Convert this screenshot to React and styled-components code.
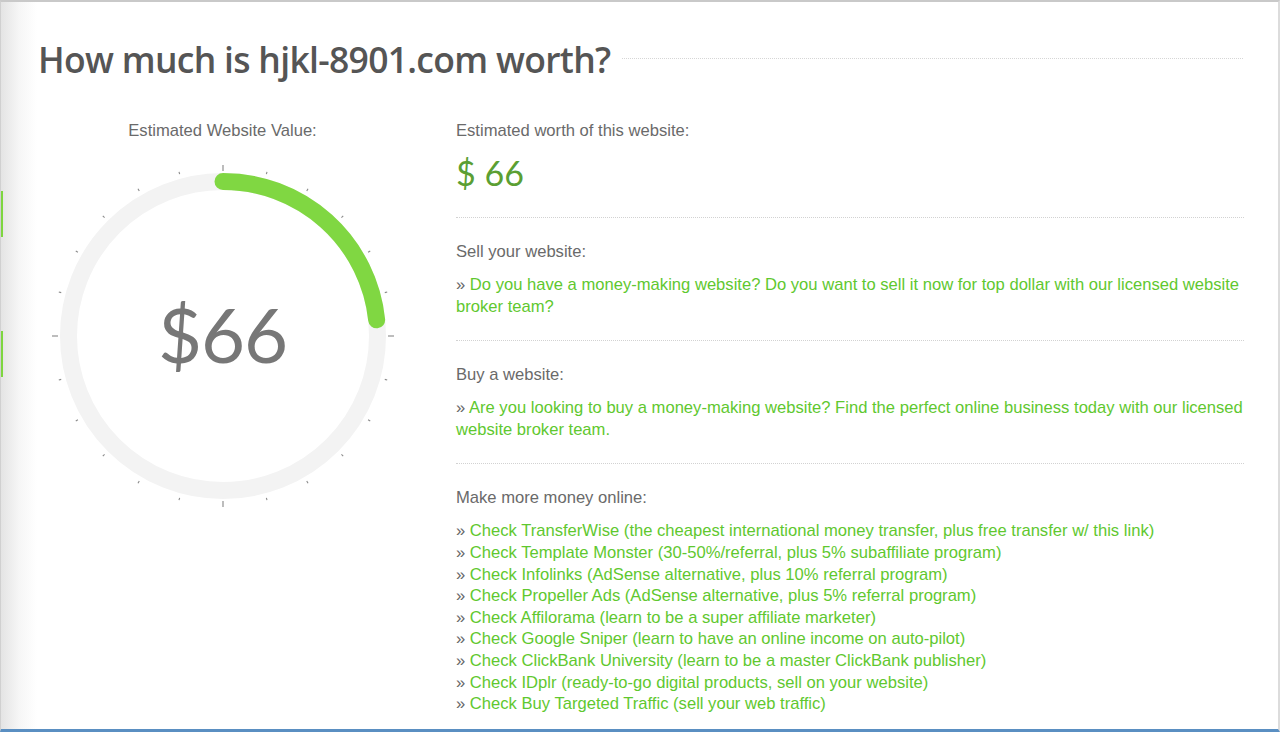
import React from 'react'
import styled, { createGlobalStyle } from 'styled-components'

const GlobalStyle = createGlobalStyle`
    html, body{
        margin:0;
        padding:0;
        background:#fff;
    }
    *{
        box-sizing:border-box;
    }
`

const links = [
    ['TransferWise', 'the cheapest international money transfer, plus free transfer w/ this link'],
    ['Template Monster', '30-50%/referral, plus 5% subaffiliate program'],
    ['Infolinks', 'AdSense alternative, plus 10% referral program'],
    ['Propeller Ads', 'AdSense alternative, plus 5% referral program'],
    ['Affilorama', 'learn to be a super affiliate marketer'],
    ['Google Sniper', 'learn to have an online income on auto-pilot'],
    ['ClickBank University', 'learn to be a master ClickBank publisher'],
    ['IDplr', 'ready-to-go digital products, sell on your website'],
    ['Buy Targeted Traffic', 'sell your web traffic'],
]

const Gauge = ({ value, angle }) => {
    const c = 180
    const r = 154.5
    const rad = angle * Math.PI / 180
    const ex = c + r * Math.sin(rad)
    const ey = c - r * Math.cos(rad)
    const ticks = []
    for (let i = 0; i < 24; i++) {
        const a = i * 15 * Math.PI / 180
        const major = i % 6 === 0
        const r1 = major ? 165 : 167.5
        const r2 = major ? 171 : 170
        ticks.push(
            <line key={i}
                x1={c + r1 * Math.sin(a)} y1={c - r1 * Math.cos(a)}
                x2={c + r2 * Math.sin(a)} y2={c - r2 * Math.cos(a)}
                stroke={major ? '#999' : '#8a8a8a'} strokeWidth={major ? 1.3 : 1.1} />
        )
    }
    return (
        <GaugeWrap>
            <svg width="360" height="360" viewBox="0 0 360 360">
                <circle cx={c} cy={c} r={r} fill="none" stroke="#f3f3f3" strokeWidth="17" />
                <path d={`M ${c} ${c - r} A ${r} ${r} 0 0 1 ${ex} ${ey}`} fill="none" stroke="#80d742" strokeWidth="17" strokeLinecap="round" />
                {ticks}
            </svg>
            <GaugeValue>{value}</GaugeValue>
        </GaugeWrap>
    )
}

const App = () => {
    return (
        <>
            <GlobalStyle />
            <Page>
                <SideMark top={189} />
                <SideMark top={329} />
                <Header>
                    <Title>How much is hjkl-8901.com worth?</Title>
                    <Dotted />
                </Header>
                <Body>
                    <LeftCol>
                        <Label center>Estimated Website Value:</Label>
                        <Gauge value="$66" angle={84} />
                    </LeftCol>
                    <RightCol>
                        <Section first>
                            <Label>Estimated worth of this website:</Label>
                            <Worth>$ 66</Worth>
                        </Section>
                        <Section>
                            <Label>Sell your website:</Label>
                            <LinkList>
                                <LinkLine>» <a>Do you have a money-making website? Do you want to sell it now for top dollar with our licensed website broker team?</a></LinkLine>
                            </LinkList>
                        </Section>
                        <Section>
                            <Label>Buy a website:</Label>
                            <LinkList>
                                <LinkLine>» <a>Are you looking to buy a money-making website? Find the perfect online business today with our licensed website broker team.</a></LinkLine>
                            </LinkList>
                        </Section>
                        <Section last>
                            <Label>Make more money online:</Label>
                            <LinkList>
                                {links.map(([name, note]) => (
                                    <LinkLine key={name}>» <a>Check {name} ({note})</a></LinkLine>
                                ))}
                            </LinkList>
                        </Section>
                    </RightCol>
                </Body>
            </Page>
        </>
    )
}

export default App

const Page = styled.div`
    position:relative;
    width:1280px;
    height:732px;
    overflow:hidden;
    border-top:2px solid #c9c9c9;
    border-bottom:3px solid #5a8fc2;
    border-left:1px solid #d0d0d0;
    border-right:2px solid #dcdcdc;
    background:linear-gradient(to right, #e4e4e4 0px, #f6f6f6 18px, #fff 36px);
    font-family:'Liberation Sans', Arial, sans-serif;
    color:#666;
`

const SideMark = styled.span`
    position:absolute;
    left:-1px;
    top:${props => props.top}px;
    width:3px;
    height:46px;
    background:#7ed640;
`

const Header = styled.div`
    display:flex;
    align-items:center;
    height:118px;
    padding:0 35px 0 37px;
    gap:12px;
`

const Title = styled.h1`
    margin:0 0 4px;
    font-family:'Open Sans', sans-serif;
    font-weight:600;
    font-size:35.5px;
    color:#555;
    white-space:nowrap;
    letter-spacing:-0.7px;
`

const Dotted = styled.div`
    flex:1;
    border-top:1px dotted #d6d6d6;
    margin-top:-6px;
`

const Body = styled.div`
    display:flex;
`

const LeftCol = styled.div`
    width:443px;
    display:flex;
    flex-direction:column;
    align-items:center;
`

const RightCol = styled.div`
    flex:1;
    padding:0 34px 0 12px;
`

const Label = styled.div`
    font-size:16.6px;
    line-height:22px;
    color:#6a6a6a;
    text-align:${props => props.center ? 'center' : 'left'};
`

const GaugeWrap = styled.div`
    position:relative;
    width:360px;
    height:360px;
    margin-top:14px;
`

const GaugeValue = styled.div`
    position:absolute;
    inset:0;
    display:flex;
    align-items:center;
    justify-content:center;
    padding-bottom:6px;
    font-family:'Lato', sans-serif;
    font-weight:400;
    font-size:76px;
    color:#777;
    letter-spacing:-1px;
`

const Section = styled.div`
    padding:${props => props.first ? '0' : '23px'} 0 ${props => props.last ? '0' : '23px'};
    border-bottom:${props => props.last ? 'none' : '1px dotted #d2d2d2'};
`

const Worth = styled.div`
    margin-top:10px;
    font-family:'Lato', sans-serif;
    font-size:34px;
    line-height:42px;
    color:#5b9f33;
`

const LinkList = styled.div`
    margin-top:11px;
`

const LinkLine = styled.div`
    font-size:16.6px;
    line-height:21.6px;
    color:#666;

    a{
        color:#5fc82f;
    }
`
